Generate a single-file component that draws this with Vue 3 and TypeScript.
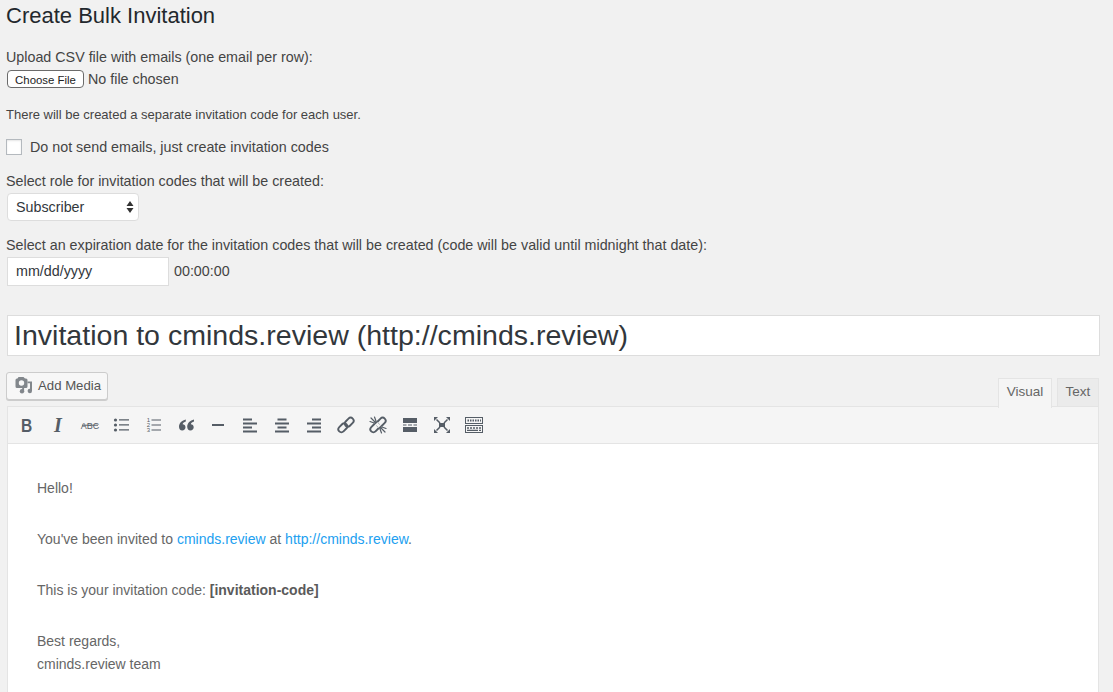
<script setup lang="ts">
const icons: string[] = ['bold','italic','abc','ul','ol','quote','hr','left','center','right','link','unlink','more','full','kitchen']
</script>

<template>
  <main class="page">
    <h2 class="heading">Create Bulk Invitation</h2>
    <div class="label upload-label">Upload CSV file with emails (one email per row):</div>
    <div class="file-row">
      <button class="choose" type="button">Choose File</button>
      <span class="no-file">No file chosen</span>
    </div>
    <p class="note">There will be created a separate invitation code for each user.</p>
    <label class="check-row">
      <span class="checkbox"></span>
      <span class="label">Do not send emails, just create invitation codes</span>
    </label>
    <div class="label role-label">Select role for invitation codes that will be created:</div>
    <div class="select">
      <span>Subscriber</span>
      <svg width="8" height="14" viewBox="0 0 8 14"><path d="M4 1 7.500 6H.5zM4 13 .5 8h7z" fill="#333"/></svg>
    </div>
    <div class="label date-label">Select an expiration date for the invitation codes that will be created (code will be valid until midnight that date):</div>
    <div class="date-row">
      <div class="date-box">mm/dd/yyyy</div>
      <span class="time">00:00:00</span>
    </div>
    <div class="title-box">Invitation to cminds.review (http://cminds.review)</div>

    <div class="tools-row">
      <button class="media" type="button">
        <svg class="media-icon" width="18" height="18" viewBox="0 0 18 18" fill="#82878c">
          <path fill-rule="evenodd" d="M3.500 1h5L10 2.500h1A1.500 1.500 0 0 1 12.500 4v6.500A1.500 1.500 0 0 1 11 12H2A1.500 1.500 0 0 1 .5 10.500V4A1.500 1.500 0 0 1 2 2.500h.5zM6.500 4.300a2.700 2.700 0 1 0 0 5.400 2.700 2.700 0 0 0 0-5.400z"/>
          <path d="M12.500 5.500H17V15a2.200 2.200 0 1 1-2-2.200V7.300h-2.500z"/>
          <circle cx="7" cy="15.300" r="2.200"/>
          <rect x="7.200" y="12" width="1.900" height="3.300"/>
        </svg>
        <span>Add Media</span>
      </button>
      <div class="tabs">
        <div class="tab active">Visual</div>
        <div class="tab">Text</div>
      </div>
    </div>

    <section class="editor">
      <div class="toolbar">
        <div v-for="icon in icons" :key="icon" class="tool">
          <svg width="20" height="20" viewBox="0 0 20 20" fill="#555d66">
            <template v-if="icon === 'bold'"><text x="0" y="0" text-anchor="middle" transform="translate(10.500 17) scale(.82 1)" class="g-bold">B</text></template>
            <template v-else-if="icon === 'italic'"><text x="10" y="17" text-anchor="middle" class="g-italic">I</text></template>
            <template v-else-if="icon === 'abc'">
              <text x="10" y="13.500" text-anchor="middle" class="g-abc">ABC</text>
              <rect x="2" y="9.700" width="16" height="1"/>
            </template>
            <template v-else-if="icon === 'ul'">
              <circle cx="3.500" cy="5" r="1.600"/><circle cx="3.500" cy="10" r="1.600"/><circle cx="3.500" cy="15" r="1.600"/>
              <path d="M7 4.300h10v1.300H7zM7 9.300h10v1.300H7zM7 14.300h10v1.300H7z"/>
            </template>
            <template v-else-if="icon === 'ol'">
              <text x="4.500" y="7" text-anchor="middle" class="g-num">1</text>
              <text x="4.500" y="12" text-anchor="middle" class="g-num">2</text>
              <text x="4.500" y="17" text-anchor="middle" class="g-num">3</text>
              <path d="M7.500 4.400H17v1.200H7.500zM7.500 9.400H17v1.200H7.500zM7.500 14.400H17v1.200H7.500z"/>
            </template>
            <template v-else-if="icon === 'quote'">
              <path d="M9.800 4.500C6 5.300 3 8 3 11.800 3 14 4.300 15.500 6.200 15.500s3.300-1.300 3.300-3.200c0-1.800-1.300-3-2.900-3 .3-1.300 1.700-2.300 3.200-2.700zM18 4.500c-3.800.8-6.800 3.500-6.800 7.300 0 2.200 1.300 3.700 3.200 3.700s3.300-1.300 3.300-3.200c0-1.800-1.300-3-2.900-3 .3-1.300 1.700-2.300 3.200-2.700z"/>
            </template>
            <template v-else-if="icon === 'hr'"><rect x="4" y="9" width="12" height="2"/></template>
            <template v-else-if="icon === 'left'"><path d="M3 3.500h9v2H3zM3 7.500h14v2H3zM3 11.500h9v2H3zM3 15.500h14v2H3z"/></template>
            <template v-else-if="icon === 'center'"><path d="M5.500 3.500h9v2h-9zM3 7.500h14v2H3zM5.500 11.500h9v2h-9zM3 15.500h14v2H3z"/></template>
            <template v-else-if="icon === 'right'"><path d="M8 3.500h9v2H8zM3 7.500h14v2H3zM8 11.500h9v2H8zM3 15.500h14v2H3z"/></template>
            <template v-else-if="icon === 'link'">
              <g fill="none" stroke="#555d66" stroke-width="1.900">
                <rect x="1.800" y="9.800" width="10" height="6" rx="3" transform="rotate(-45 6.800 12.800)"/>
                <rect x="8.200" y="4.200" width="10" height="6" rx="3" transform="rotate(-45 13.200 7.200)"/>
              </g>
            </template>
            <template v-else-if="icon === 'unlink'">
              <g fill="none" stroke="#555d66" stroke-width="1.900">
                <rect x="1.800" y="9.800" width="10" height="6" rx="3" transform="rotate(-45 6.800 12.800)"/>
                <rect x="8.200" y="4.200" width="10" height="6" rx="3" transform="rotate(-45 13.200 7.200)"/>
              </g>
              <g stroke="#f5f5f5" stroke-width="3"><path d="M6 6l8 8"/></g>
              <g stroke="#555d66" stroke-width="1.200" stroke-linecap="round">
                <path d="M2 6.500l5.500 2M3 3l5 5M6.500 2l2 5.500M13.500 18l-2-5.500M17 17l-5-5M18 13.500l-5.500-2"/>
              </g>
            </template>
            <template v-else-if="icon === 'more'"><path d="M3 3h14v5H3zM3 12h14v5H3zM3 9.400h3.500v1.200H3zM8 9.400h4v1.200H8zM13.500 9.400H17v1.200h-3.500z"/></template>
            <template v-else-if="icon === 'full'">
              <path d="M7 8h6v4H7z"/>
              <g stroke="#555d66" stroke-width="1.500"><path d="M4.500 4.500 8 8M15.500 4.500 12 8M4.500 15.500 8 12M15.500 15.500 12 12"/></g>
              <path d="M2 2h4L2 6zM18 2v4L14 2zM2 18v-4L6 18zM18 18h-4l4-4z"/>
            </template>
            <template v-else>
              <path fill-rule="evenodd" d="M1 2h18v7H1zM2 3v5h16V3zM1 10h18v8H1zM2 11v6h16v-6z"/>
              <path d="M3.500 4.500h1.500v2H3.500zM6 4.500h1.500v2H6zM8.500 4.500H10v2H8.500zM11 4.500h1.500v2H11zM13.500 4.500H15v2h-1.500zM16 4.500h1v2h-1zM3 12.200h2v1.500H3zM6 12.200h2v1.500H6zM9 12.200h2v1.500H9zM12 12.200h2v1.500h-2zM15 12.200h2v1.500h-2zM3 14.700h11v1.300H3zM15 14.700h2v1.300h-2z"/>
            </template>
          </svg>
        </div>
      </div>
      <div class="content">
        <p>Hello!</p>
        <p>You've been invited to <a>cminds.review</a> at <a>http://cminds.review</a>.</p>
        <p>This is your invitation code: <strong>[invitation-code]</strong></p>
        <p class="tight">Best regards,<br>cminds.review team</p>
      </div>
    </section>
  </main>
</template>

<style>
html, body { margin: 0; background: #f1f1f1; overflow: hidden; }
</style>

<style scoped>
.page {
  display: flex;
  flex-direction: column;
  height: 692px;
  overflow: hidden;
  box-sizing: border-box;
  padding: 0 13px 0 6px;
  background: #f1f1f1;
  color: #444;
  font-family: "Liberation Sans", Arial, sans-serif;
  font-size: 14.300px;
  line-height: 20px;
}
.heading {
  margin: 0;
  padding-top: 2px;
  font-size: 22px;
  line-height: 27px;
  font-weight: 400;
  color: #23282d;
}
.upload-label { margin-top: 18px; }
.file-row { display: flex; align-items: center; height: 24px; margin-top: 0; padding-left: 1px; }
.choose {
  box-sizing: border-box;
  width: 77px;
  height: 18px;
  padding: 1px 0 0;
  border: 1px solid #6b6b6b;
  border-radius: 4px;
  background: #fff;
  color: #222;
  font: 11.400px "Liberation Sans", Arial, sans-serif;
  line-height: 16px;
}
.no-file { margin-left: 4px; }
.note { margin: 14px 0 0; font-size: 13px; }
.check-row { display: flex; align-items: center; gap: 8px; margin-top: 12px; }
.checkbox {
  box-sizing: border-box;
  width: 16px;
  height: 16px;
  background: #fff;
  border: 1px solid #b4b9be;
  box-shadow: inset 0 1px 2px rgba(0,0,0,.1);
}
.role-label { margin-top: 14px; }
.select {
  box-sizing: border-box;
  display: flex;
  align-items: center;
  justify-content: space-between;
  width: 132px;
  height: 28px;
  margin: 2px 0 0 1px;
  padding: 0 4px 0 8px;
  background: #fff;
  border: 1px solid #ddd;
  border-radius: 4px;
  color: #32373c;
}
.date-label { margin-top: 14px; }
.date-row { display: flex; align-items: center; height: 30px; margin: 1px 0 1px 1px; gap: 5px; }
.date-box {
  box-sizing: border-box;
  width: 162px;
  height: 29px;
  padding: 0 8px;
  line-height: 27px;
  background: #fff;
  border: 1px solid #ddd;
  color: #32373c;
}
.time { position: relative; }
.title-box {
  box-sizing: border-box;
  height: 41px;
  margin: 28px 0 0 1px;
  padding: 0 6px;
  background: #fff;
  border: 1px solid #ddd;
  color: #32373c;
  font-size: 28.550px;
  line-height: 38px;
}
.tools-row { display: flex; justify-content: space-between; align-items: flex-start; height: 34px; margin-top: 16px; }
.media {
  box-sizing: border-box;
  display: flex;
  align-items: center;
  gap: 5px;
  width: 102px;
  height: 28px;
  padding: 0 0 2px 8px;
  background: #f7f7f7;
  border: 1px solid #ccc;
  border-radius: 3px;
  box-shadow: 0 1px 0 #ccc;
  color: #555;
  font: 13.200px "Liberation Sans", Arial, sans-serif;
  white-space: nowrap;
}
.media-icon { flex: none; }
.tabs { display: flex; align-items: flex-start; gap: 5px; margin: 6px 1px 0 0; position: relative; z-index: 1; }
.tab {
  box-sizing: border-box;
  width: 42px;
  height: 28px;
  text-align: center;
  line-height: 26px;
  background: #ebebeb;
  border: 1px solid #e4e4e4;
  border-bottom: 0;
  color: #666;
  font-size: 13.500px;
}
.tab.active {
  width: 54px;
  height: 30px;
  background: #f5f5f5;
}
.editor { flex: 1; min-height: 0; box-sizing: border-box; margin: 0 1px 0 1px; border: 1px solid #e4e4e4; border-bottom: 0; background: #fff; }
.toolbar {
  display: flex;
  align-items: center;
  height: 36px;
  padding-left: 2px;
  background: #f5f5f5;
  border-bottom: 1px solid #e4e4e4;
}
.tool { display: flex; justify-content: center; align-items: center; width: 32px; height: 36px; }
.g-bold { font: 700 19px "Liberation Sans", sans-serif; }
.g-italic { font: italic 700 20px "Liberation Serif", serif; }
.g-abc { font: 9px "Liberation Sans", sans-serif; }
.g-num { font: 6px "Liberation Sans", sans-serif; }
.content { padding: 33px 29px 0; color: #666; font-size: 14px; line-height: 23px; }
.content p { margin: 0 0 28px; }
.content a { color: #21a0f0; }
.content strong { color: #5a5a5a; }
</style>
